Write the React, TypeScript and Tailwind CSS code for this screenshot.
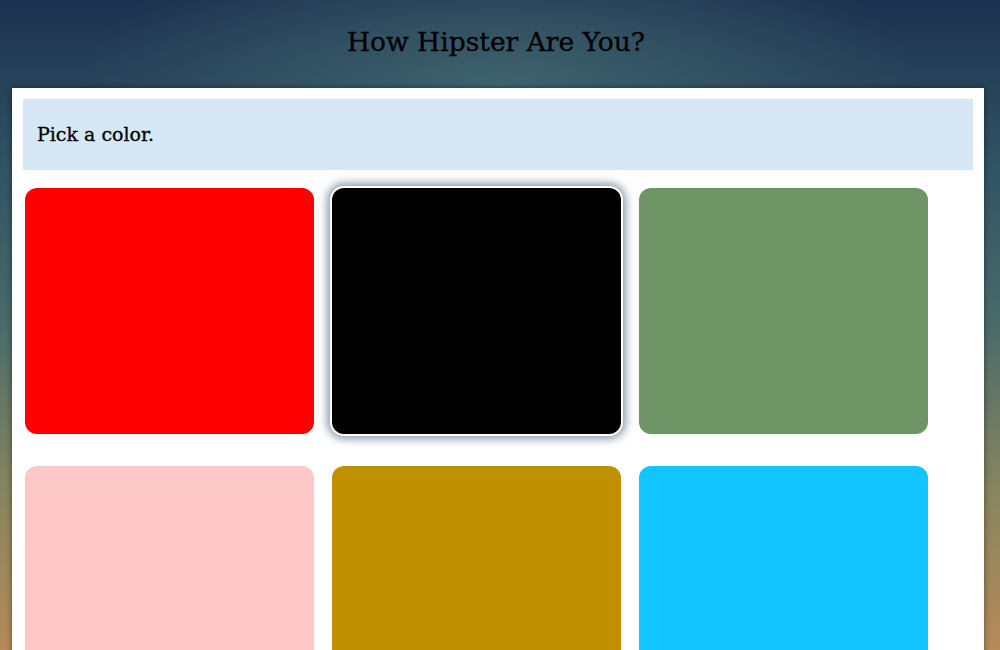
const colors = [
  { hex: "bg-[#ff0000]", selected: false },
  { hex: "bg-[#000000]", selected: true },
  { hex: "bg-[#6f9566]", selected: false },
  { hex: "bg-[#fec8c8]", selected: false },
  { hex: "bg-[#c09000]", selected: false },
  { hex: "bg-[#12c4ff]", selected: false },
];

const App = () => {
  return (
    <div className="h-[650px] overflow-hidden bg-[radial-gradient(ellipse_420px_160px_at_50%_85px,rgba(70,110,115,0.75),rgba(70,110,115,0)),linear-gradient(to_bottom,#1d3150_0%,#2f5363_25%,#4a6b6a_50%,#86855f_75%,#b68a5a_100%)] font-['DejaVu_Serif',serif] text-black [-webkit-text-stroke:0.3px_black]">
      <h1 className="h-[88px] pr-[8px] flex items-center justify-center text-[26.5px] leading-none pb-[4px]">
        How Hipster Are You?
      </h1>
      <div className="ml-[12px] w-[972px] bg-white p-[11px] min-h-[600px] shadow-[0_0_6px_rgba(0,0,0,0.45)]">
        <div className="h-[71px] bg-[#d6e8f5] px-[14px] pb-[1px] flex items-center text-[19px]">
          Pick a color.
        </div>
        <div className="mt-[16px] grid grid-cols-[289px_289px_289px] gap-x-[18px] gap-y-[32px] px-[2px] pt-[2px]">
          {colors.map((c, i) => (
            <div
              key={i}
              className={
                c.selected
                  ? `h-[246px] rounded-[12px] ${c.hex} shadow-[0_0_0_2px_#fff,0_0_9px_5px_rgba(60,90,115,0.6)]`
                  : `h-[246px] rounded-[12px] ${c.hex}`
              }
            />
          ))}
        </div>
      </div>
    </div>
  );
};

export default App;
